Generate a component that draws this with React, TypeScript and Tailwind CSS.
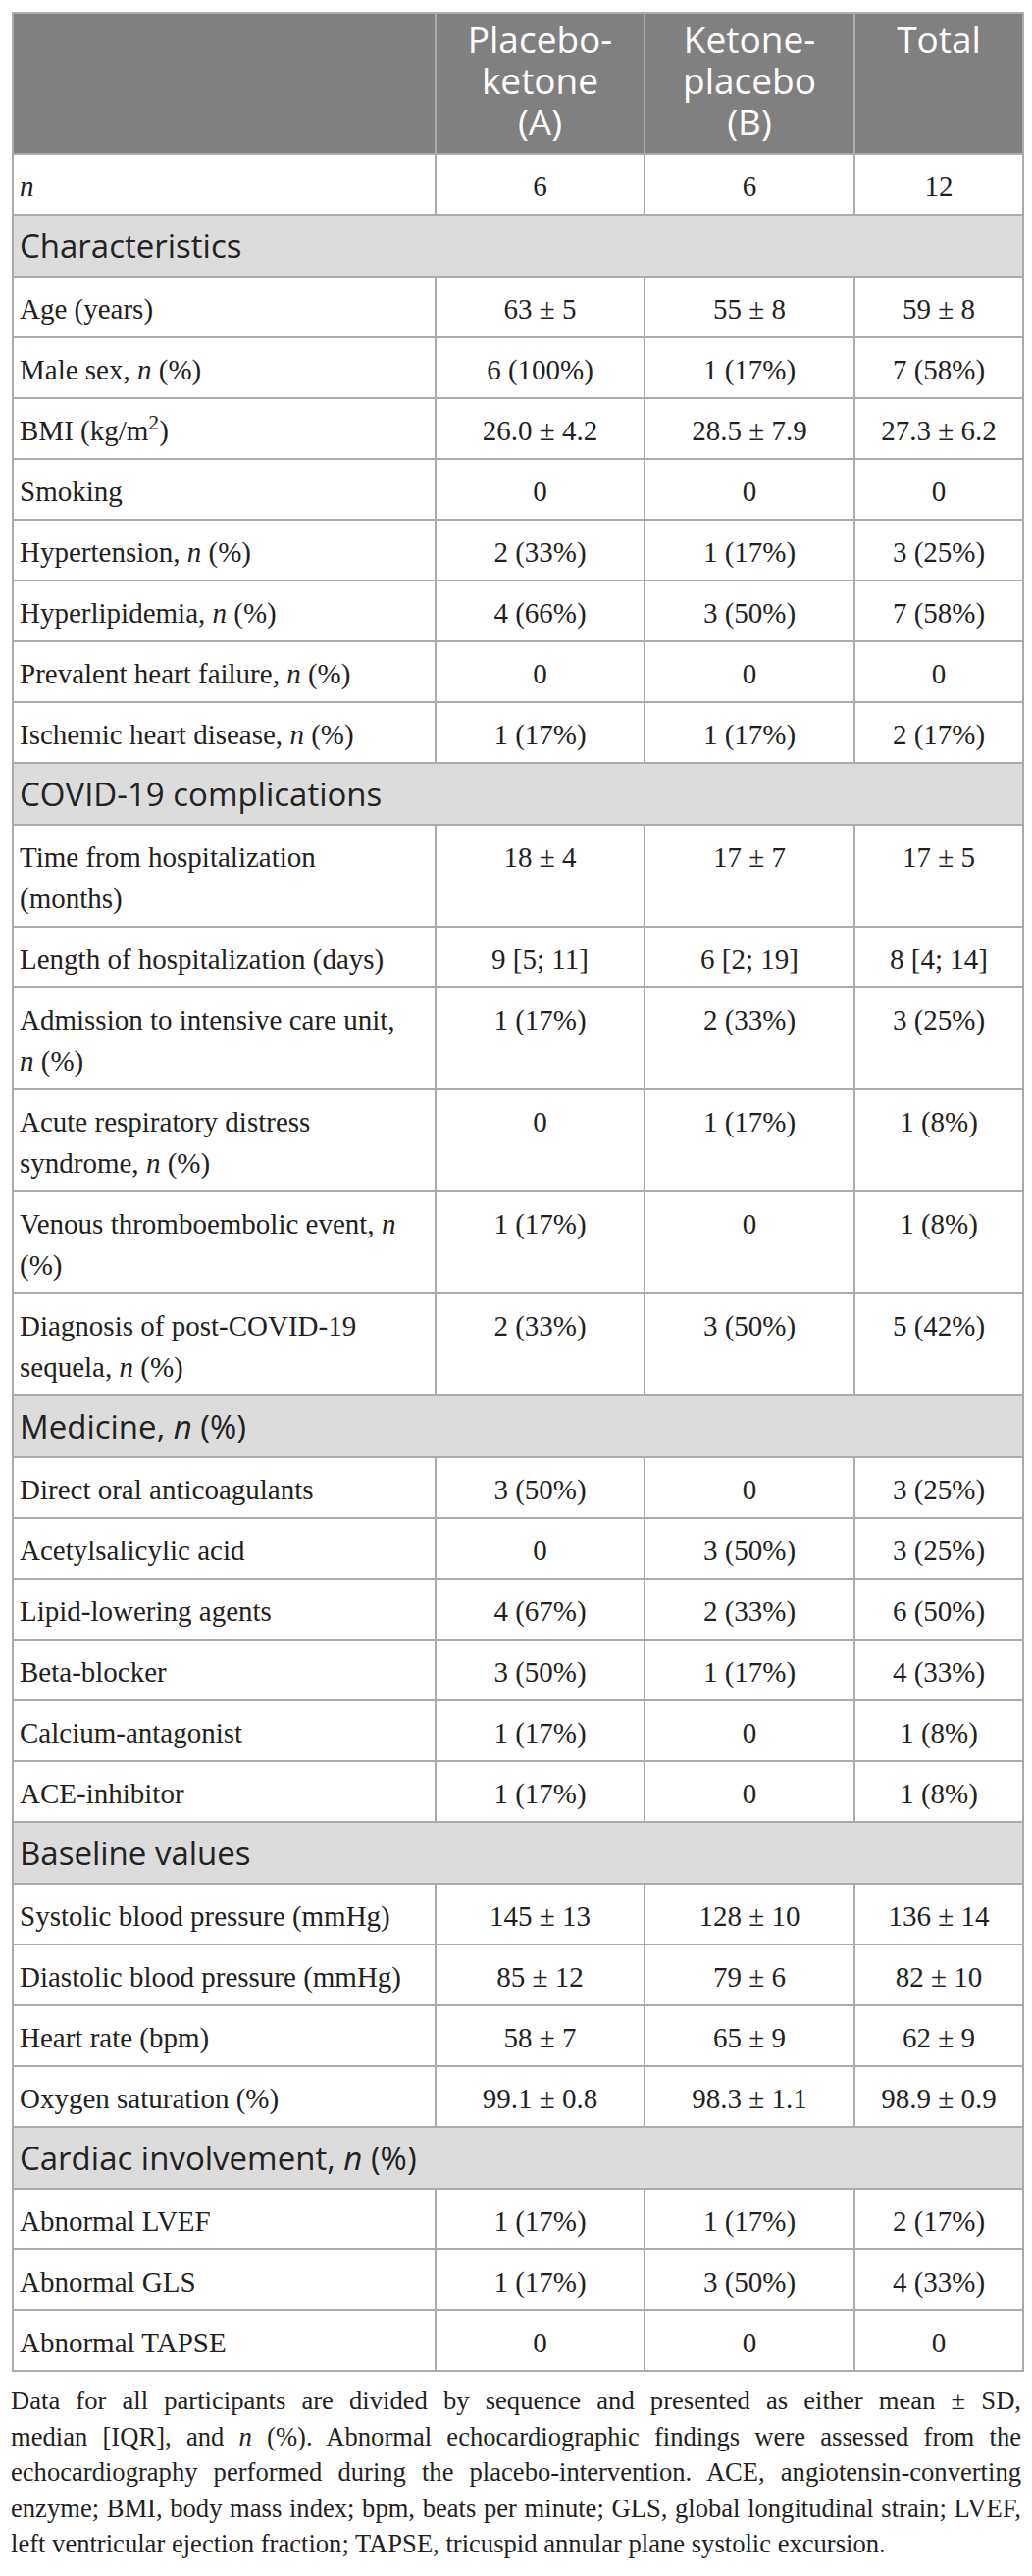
import type { ReactNode } from 'react';

type Row =
    | { kind: 'section'; label: ReactNode }
    | { kind: 'data'; label: ReactNode; a: string; b: string; t: string };

const n = <i>n</i>;

const rows: Row[] = [
    { kind: 'data', label: n, a: '6', b: '6', t: '12' },
    { kind: 'section', label: 'Characteristics' },
    { kind: 'data', label: 'Age (years)', a: '63 ± 5', b: '55 ± 8', t: '59 ± 8' },
    { kind: 'data', label: <>Male sex, {n} (%)</>, a: '6 (100%)', b: '1 (17%)', t: '7 (58%)' },
    { kind: 'data', label: <>BMI (kg/m<sup>2</sup>)</>, a: '26.0 ± 4.2', b: '28.5 ± 7.9', t: '27.3 ± 6.2' },
    { kind: 'data', label: 'Smoking', a: '0', b: '0', t: '0' },
    { kind: 'data', label: <>Hypertension, {n} (%)</>, a: '2 (33%)', b: '1 (17%)', t: '3 (25%)' },
    { kind: 'data', label: <>Hyperlipidemia, {n} (%)</>, a: '4 (66%)', b: '3 (50%)', t: '7 (58%)' },
    { kind: 'data', label: <>Prevalent heart failure, {n} (%)</>, a: '0', b: '0', t: '0' },
    { kind: 'data', label: <>Ischemic heart disease, {n} (%)</>, a: '1 (17%)', b: '1 (17%)', t: '2 (17%)' },
    { kind: 'section', label: 'COVID-19 complications' },
    { kind: 'data', label: <>Time from hospitalization<br />(months)</>, a: '18 ± 4', b: '17 ± 7', t: '17 ± 5' },
    { kind: 'data', label: 'Length of hospitalization (days)', a: '9 [5; 11]', b: '6 [2; 19]', t: '8 [4; 14]' },
    { kind: 'data', label: <>Admission to intensive care unit,<br />{n} (%)</>, a: '1 (17%)', b: '2 (33%)', t: '3 (25%)' },
    { kind: 'data', label: <>Acute respiratory distress<br />syndrome, {n} (%)</>, a: '0', b: '1 (17%)', t: '1 (8%)' },
    { kind: 'data', label: <>Venous thromboembolic event, {n}<br />(%)</>, a: '1 (17%)', b: '0', t: '1 (8%)' },
    { kind: 'data', label: <>Diagnosis of post-COVID-19<br />sequela, {n} (%)</>, a: '2 (33%)', b: '3 (50%)', t: '5 (42%)' },
    { kind: 'section', label: <>Medicine, {n} (%)</> },
    { kind: 'data', label: 'Direct oral anticoagulants', a: '3 (50%)', b: '0', t: '3 (25%)' },
    { kind: 'data', label: 'Acetylsalicylic acid', a: '0', b: '3 (50%)', t: '3 (25%)' },
    { kind: 'data', label: 'Lipid-lowering agents', a: '4 (67%)', b: '2 (33%)', t: '6 (50%)' },
    { kind: 'data', label: 'Beta-blocker', a: '3 (50%)', b: '1 (17%)', t: '4 (33%)' },
    { kind: 'data', label: 'Calcium-antagonist', a: '1 (17%)', b: '0', t: '1 (8%)' },
    { kind: 'data', label: 'ACE-inhibitor', a: '1 (17%)', b: '0', t: '1 (8%)' },
    { kind: 'section', label: 'Baseline values' },
    { kind: 'data', label: 'Systolic blood pressure (mmHg)', a: '145 ± 13', b: '128 ± 10', t: '136 ± 14' },
    { kind: 'data', label: 'Diastolic blood pressure (mmHg)', a: '85 ± 12', b: '79 ± 6', t: '82 ± 10' },
    { kind: 'data', label: 'Heart rate (bpm)', a: '58 ± 7', b: '65 ± 9', t: '62 ± 9' },
    { kind: 'data', label: 'Oxygen saturation (%)', a: '99.1 ± 0.8', b: '98.3 ± 1.1', t: '98.9 ± 0.9' },
    { kind: 'section', label: <>Cardiac involvement, {n} (%)</> },
    { kind: 'data', label: 'Abnormal LVEF', a: '1 (17%)', b: '1 (17%)', t: '2 (17%)' },
    { kind: 'data', label: 'Abnormal GLS', a: '1 (17%)', b: '3 (50%)', t: '4 (33%)' },
    { kind: 'data', label: 'Abnormal TAPSE', a: '0', b: '0', t: '0' },
];

const cell = "border-2 border-[#ababab] px-[6px] pt-[11px] pb-[7px] align-top";
const head = "border-2 border-[#ababab] bg-[#808080] text-white px-[6px] pt-[5px] pb-[11px] align-top text-center font-['Open_Sans',sans-serif] text-[37px] leading-[42px] font-normal";

const App = () => {
    return (
        <main className="bg-white px-[12px] pt-[12px] pb-[14px] text-[#231f20]">
            <table className="w-[1030px] table-fixed border-collapse border-2 border-[#ababab] font-['Liberation_Serif',serif] text-[29px] leading-[42px]">
                <colgroup>
                    <col className="w-[431px]" />
                    <col className="w-[213px]" />
                    <col className="w-[214px]" />
                    <col className="w-[172px]" />
                </colgroup>
                <thead>
                    <tr>
                        <th className={head}></th>
                        <th className={head}>Placebo-<br />ketone<br />(A)</th>
                        <th className={head}>Ketone-<br />placebo<br />(B)</th>
                        <th className={head}>Total</th>
                    </tr>
                </thead>
                <tbody>
                    {rows.map((row, i) =>
                        row.kind === 'section' ? (
                            <tr key={i}>
                                <td colSpan={4}
                                    className="border-2 border-[#ababab] bg-[#dcdcdc] px-[6px] pt-[9px] pb-[9px] font-['Open_Sans',sans-serif] text-[33px] leading-[43px] text-[#222]">
                                    {row.label}
                                </td>
                            </tr>
                        ) : (
                            <tr key={i}>
                                <td className={cell + " whitespace-nowrap"}>{row.label}</td>
                                <td className={cell + " text-center"}>{row.a}</td>
                                <td className={cell + " text-center"}>{row.b}</td>
                                <td className={cell + " text-center"}>{row.t}</td>
                            </tr>
                        )
                    )}
                </tbody>
            </table>

            {/* footnote, one block per line so the breaks match */}
            <div className="mt-[11px] w-[1030px] -ml-px font-['Liberation_Serif',serif] text-[26.6px] leading-[36.5px] whitespace-nowrap">
                <div className="text-justify [text-align-last:justify]">Data for all participants are divided by sequence and presented as either mean ± SD,</div>
                <div className="text-justify [text-align-last:justify]">median [IQR], and <i>n</i> (%). Abnormal echocardiographic findings were assessed from the</div>
                <div className="text-justify [text-align-last:justify]">echocardiography performed during the placebo-intervention. ACE, angiotensin-converting</div>
                <div className="text-justify [text-align-last:justify]">enzyme; BMI, body mass index; bpm, beats per minute; GLS, global longitudinal strain; LVEF,</div>
                <div>left ventricular ejection fraction; TAPSE, tricuspid annular plane systolic excursion.</div>
            </div>
        </main>
    );
};

export default App;
